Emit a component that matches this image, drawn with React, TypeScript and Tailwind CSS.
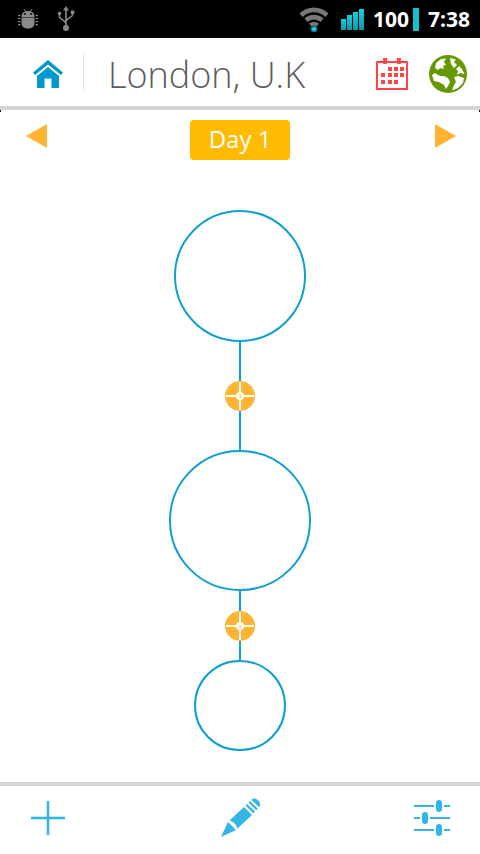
function AndroidIcon() {
  return (
    <svg width="22" height="22" viewBox="0 0 22 22" fill="#8a8a8a">
      <path d="M7 1 L9 4 M15 1 L13 4" stroke="#8a8a8a" strokeWidth="1" />
      <path d="M4.5 9 C4.5 4.500 7.500 3 11 3 C14.500 3 17.500 4.500 17.500 9 Z" />
      <path d="M4.500 9.600 H17.500 V15 C17.500 19 14.500 20.500 11 20.500 C7.500 20.500 4.500 19 4.500 15 Z" />
      <rect x="1" y="7" width="2.500" height="1.200" />
      <rect x="1" y="10" width="2.500" height="1.200" />
      <rect x="1" y="13" width="2.500" height="1.200" />
      <rect x="1" y="16" width="2.500" height="1.200" />
      <rect x="18.500" y="7" width="2.500" height="1.200" />
      <rect x="18.500" y="10" width="2.500" height="1.200" />
      <rect x="18.500" y="13" width="2.500" height="1.200" />
      <rect x="18.500" y="16" width="2.500" height="1.200" />
      <circle cx="8" cy="6" r="0.900" fill="#000" />
      <circle cx="14" cy="6" r="0.900" fill="#000" />
    </svg>
  )
}

function UsbIcon() {
  return (
    <svg width="18" height="26" viewBox="0 0 18 26" fill="#8a8a8a">
      <path d="M9 0 L12 4.500 H6 Z" />
      <rect x="8.200" y="3" width="1.600" height="18" />
      <circle cx="9" cy="22" r="3" />
      <path d="M2.500 8 V11 C2.500 13 8 14 8.500 17" fill="none" stroke="#8a8a8a" strokeWidth="1.500" />
      <path d="M15.500 7 V9 C15.500 11 10 12 9.500 15" fill="none" stroke="#8a8a8a" strokeWidth="1.500" />
      <circle cx="2.500" cy="7.500" r="1.800" />
      <rect x="13.800" y="4.500" width="3.500" height="3.500" />
    </svg>
  )
}

function WifiIcon() {
  return (
    <svg width="30" height="26" viewBox="0 0 30 26">
      <path d="M0.500 7.500 C8 -0.500 22 -0.500 29.500 7.500 L26.500 11 C20 4.500 10 4.500 3.500 11 Z" fill="#777" />
      <path d="M5.500 12.500 C11 7.500 19 7.500 24.500 12.500 L21.500 16 C17.500 12.500 12.500 12.500 8.500 16 Z" fill="#777" />
      <path d="M10 17.500 C13 15.500 17 15.500 20 17.500 L17.500 20.500 C16 19.500 14 19.500 12.500 20.500 Z" fill="#777" />
      <circle cx="15" cy="23" r="3.500" fill="#0a6f86" />
      <circle cx="15" cy="23" r="2" fill="#2cc6ee" />
    </svg>
  )
}

function SignalIcon() {
  return (
    <div className="flex items-end gap-[1px] h-[22px]">
      <div className="w-[5px] h-[11px] bg-gradient-to-b from-[#12d2e2] to-[#0a98a8]" />
      <div className="w-[5px] h-[15px] bg-gradient-to-b from-[#12d2e2] to-[#0a98a8]" />
      <div className="w-[5px] h-[18px] bg-gradient-to-b from-[#12d2e2] to-[#0a98a8]" />
      <div className="w-[5px] h-[21px] bg-gradient-to-b from-[#12d2e2] to-[#0a98a8]" />
    </div>
  )
}

function HomeIcon() {
  return (
    <svg width="30" height="28" viewBox="0 0 30 28" fill="#0099cc">
      <path d="M15 0 L30 12.500 L28 15 L15 4.500 L2 15 L0 12.500 Z" />
      <path d="M15 7 L26 16 V28 H18.500 V18.500 H11.500 V28 H4 V16 Z" />
    </svg>
  )
}

function CalendarIcon() {
  const cells = [
    [12, 9], [18, 9], [24, 9],
    [5, 15], [12, 15], [18, 15], [24, 15],
    [5, 22], [12, 22], [18, 22],
  ]
  return (
    <svg width="32" height="32" viewBox="0 0 32 32" fill="#ff4545">
      <rect x="1" y="4" width="30" height="27" fill="none" stroke="#ff4545" strokeWidth="2" />
      <rect x="7" y="0" width="4" height="6" />
      <rect x="21" y="0" width="4" height="6" />
      {cells.map(([x, y]) => (
        <rect key={`${x}-${y}`} x={x} y={y} width="4" height="4" />
      ))}
    </svg>
  )
}

function GlobeIcon() {
  return (
    <svg width="38" height="38" viewBox="0 0 38 38">
      <circle cx="19" cy="19" r="19" fill="#669900" />
      <path d="M7 8 L12 4 L17 3.500 L15 7 L17 10 L14 11 L15 14 L11 13 L9 15 L6 13 Z" fill="#fff" />
      <path d="M21 3 L27 4.500 L25 7 L28 10 L25 13 L22 9 Z" fill="#fff" />
      <path d="M27 14 L30 11 L33 14 L35.500 19 L31 18 L28 20 L29 16 Z" fill="#fff" />
      <path d="M3 20 L6 18 L11 21 L15 21 L19 23 L21 27 L19 31 L17 34 L15 30 L10 27 L5 26 Z" fill="#fff" />
      <path d="M25 22 L29 21 L35 23 L34 28 L29 33 L23 35.500 L25 30 L27 27 Z" fill="#fff" />
    </svg>
  )
}

function PlusIcon() {
  return (
    <svg width="34" height="34" viewBox="0 0 34 34" fill="#33b5e5">
      <rect x="15.700" y="0" width="2.600" height="34" />
      <rect x="0" y="15.700" width="34" height="2.600" />
    </svg>
  )
}

function PencilIcon() {
  return (
    <svg width="40" height="40" viewBox="0 0 40 40" fill="#33b5e5">
      <path d="M0 39 L7 24 L15 32 Z" />
      <path d="M8.500 22.500 L23 9 L31 17 L16.500 30.500 C15 26 13 24 8.500 22.500 Z" />
      <path d="M24.500 7.500 L26 6 L34 13.500 L32.500 15.500 Z" />
      <path d="M27.500 4.500 L29 3 L36.500 10.500 L35.500 12.500 Z" />
      <path d="M30.500 2 C32 0 34 0 36 1.500 L38 3.500 C39.500 5.500 39.500 7.500 38 9 Z" />
    </svg>
  )
}

function SlidersIcon() {
  return (
    <svg width="36" height="36" viewBox="0 0 36 36" fill="#33b5e5">
      <rect x="0" y="5" width="20" height="2" />
      <rect x="30" y="5" width="6" height="2" />
      <rect x="22" y="0" width="6" height="12" rx="3" />
      <rect x="0" y="17" width="6" height="2" />
      <rect x="16" y="17" width="20" height="2" />
      <rect x="8" y="12" width="6" height="12" rx="3" />
      <rect x="0" y="29" width="20" height="2" />
      <rect x="30" y="29" width="6" height="2" />
      <rect x="22" y="24" width="6" height="12" rx="3" />
    </svg>
  )
}

function Marker() {
  return (
    <div className="relative w-[30px] h-[30px] rounded-full bg-[#ffb533] shrink-0">
      <div className="absolute left-[14px] top-[1px] w-[2px] h-[28px] bg-white" />
      <div className="absolute top-[14px] left-[1px] h-[2px] w-[28px] bg-white" />
      <div className="absolute left-[11px] top-[11px] w-[8px] h-[8px] rounded-full bg-white flex items-center justify-center">
        <div className="w-[3px] h-[3px] rounded-full bg-[#ffd590]" />
      </div>
    </div>
  )
}

export default function App() {
  return (
    <div className="relative w-[480px] h-[854px] flex flex-col bg-white overflow-hidden font-['Open_Sans',sans-serif]">
      {/* Status bar */}
      <div className="h-[38px] bg-black flex items-center shrink-0">
        <div className="ml-[17px] mt-[-1px]"><AndroidIcon /></div>
        <div className="ml-[18px] mt-[-1px]"><UsbIcon /></div>
        <div className="ml-auto"><WifiIcon /></div>
        <div className="ml-[12px]"><SignalIcon /></div>
        <span className="ml-[9px] text-white font-bold text-[21px] leading-none">100</span>
        <div className="ml-[4px] w-[6px] h-[23px] bg-[#12c0cf]" />
        <span className="ml-[9px] mr-[10px] text-white font-bold text-[21px] leading-none">7:38</span>
      </div>

      {/* Header */}
      <div className="h-[68px] flex items-center shrink-0 pt-[4px]">
        <div className="ml-[33px]"><HomeIcon /></div>
        <div className="ml-[20px] mt-[-4px] w-px h-[36px] bg-[#e4e4e4]" />
        <span className="ml-[24px] mt-[2px] text-[36px] font-light leading-none text-[#5c5c5c]">London, U.K</span>
        <div className="ml-auto"><CalendarIcon /></div>
        <div className="ml-[21px] mr-[13px]"><GlobeIcon /></div>
      </div>
      <div className="h-[4px] bg-[#d4d4d4] shrink-0" />
      <div className="absolute left-0 top-[110px] w-px h-[2px] bg-black" />
      <div className="absolute right-0 top-[110px] w-px h-[2px] bg-black" />

      {/* Day selector */}
      <div className="flex items-center justify-between pl-[26px] pr-[24px] mt-[10px] h-[40px] shrink-0">
        <div className="mt-[-8px] w-0 h-0 border-y-[12px] border-y-transparent border-r-[21px] border-r-[#ffb533]" />
        <div className="mr-[2px] w-[100px] h-[40px] rounded-[4px] bg-[#ffbb00] text-white text-[24px] leading-none pb-[3px] flex items-center justify-center">
          Day 1
        </div>
        <div className="mt-[-8px] w-0 h-0 border-y-[12px] border-y-transparent border-l-[21px] border-l-[#ffb533]" />
      </div>

      {/* Route */}
      <div className="flex-1 flex flex-col items-center pt-[50px]">
        <div className="w-[132px] h-[132px] rounded-full border-2 border-[#0f9fd0] shrink-0" />
        <div className="w-[2px] h-[39px] bg-[#0f9fd0] shrink-0" />
        <Marker />
        <div className="w-[2px] h-[39px] bg-[#0f9fd0] shrink-0" />
        <div className="w-[142px] h-[141px] rounded-full border-2 border-[#0f9fd0] shrink-0" />
        <div className="w-[2px] h-[20px] bg-[#0f9fd0] shrink-0" />
        <Marker />
        <div className="w-[2px] h-[19px] bg-[#0f9fd0] shrink-0" />
        <div className="w-[92px] h-[91px] rounded-full border-2 border-[#0f9fd0] shrink-0" />
      </div>

      {/* Bottom bar */}
      <div className="h-[4px] bg-[#d4d4d4] shrink-0" />
      <div className="h-[68px] flex items-center justify-between shrink-0 pl-[31px] pr-[30px] pb-[4px]">
        <PlusIcon />
        <div className="ml-[3px]"><PencilIcon /></div>
        <SlidersIcon />
      </div>
    </div>
  )
}
